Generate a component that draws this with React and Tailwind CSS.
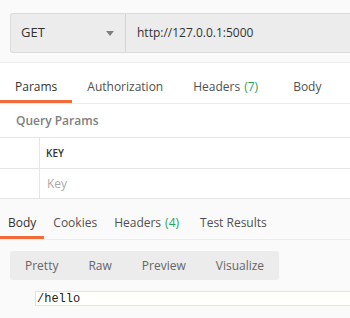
import React from 'react';

const requestTabs = [
  { label: 'Params', active: true },
  { label: 'Authorization' },
  { label: 'Headers', count: '(7)' },
  { label: 'Body' },
];

const responseTabs = [
  { label: 'Body', active: true },
  { label: 'Cookies' },
  { label: 'Headers', count: '(4)' },
  { label: 'Test Results' },
];

const modes = ['Pretty', 'Raw', 'Preview', 'Visualize'];

export default function App() {
  return (
    <div className="w-[350px] h-[318px] overflow-hidden bg-[#fafafa] text-[12px] text-[#505050] font-['Open_Sans',sans-serif]">
      {/* request bar */}
      <div className="h-[63px] pt-[13px] pl-[10px] border-b border-[#ececec]">
        <div className="flex h-[40px] bg-[#ececec] border border-r-0 border-[#dcdcdc] rounded-l-[3px]">
          <div className="w-[115px] flex items-center justify-between pl-[10px] pr-[11px] border-r border-[#d4d4d4] text-[13px] text-[#333]">
            <span>GET</span>
            <svg width="8" height="5" viewBox="0 0 8 5">
              <path d="M0 0h8L4 5z" fill="#808080" />
            </svg>
          </div>
          <div className="flex items-center pl-[11px] text-[#333]">http://127.0.0.1:5000</div>
        </div>
      </div>

      {/* request tabs */}
      <div className="flex h-[41px] bg-white border-b border-[#ececec]">
        {requestTabs.map((t) => (
          <div
            key={t.label}
            className={`flex items-center pt-[11px] pl-[15px] border-b-[3px] ${t.count ? 'pr-[20px]' : 'pr-[15px]'} ${t.active ? 'border-[#f26b3a] text-[#333]' : 'border-transparent'}`}
          >
            {t.label}
            {t.count && <span className="ml-[4px] text-[#26a35f]">{t.count}</span>}
          </div>
        ))}
      </div>

      <div className="bg-white">
        <div className="h-[33px] flex items-center pl-[16px] font-semibold text-[#808080]">Query Params</div>
        <div className="flex h-[31px] border-t border-[#e6e6e6]">
          <div className="w-[40px] border-r border-[#e6e6e6]" />
          <div className="flex items-center pl-[6px] text-[10px] font-semibold text-[#333]">KEY</div>
        </div>
        <div className="flex h-[31px] border-t border-b border-[#e6e6e6]">
          <div className="w-[40px] border-r border-[#e6e6e6]" />
          <div className="flex items-center pl-[7px] text-[#aaa]">Key</div>
        </div>
      </div>

      {/* response */}
      <div className="pt-[5px]">
        <div className="flex h-[36px] border-b border-[#ececec]">
          {responseTabs.map((t) => (
            <div
              key={t.label}
              className={`flex items-center pt-[5px] pl-[8px] mr-[1px] border-b-[3px] ${t.count ? 'pr-[12px]' : 'pr-[8px]'} ${t.active ? 'border-[#f26b3a] text-[#333]' : 'border-transparent'}`}
            >
              {t.label}
              {t.count && <span className="ml-[4px] text-[#26a35f]">{t.count}</span>}
            </div>
          ))}
        </div>

        <div className="flex mt-[11px] ml-[10px] w-max h-[29px] bg-[#ececec] rounded-[3px]">
          {modes.map((m) => (
            <div key={m} className="flex items-center px-[15px] text-[#666]">{m}</div>
          ))}
        </div>

        <div className="mt-[11px] ml-[35px] h-[15px] flex items-center pl-[1px] bg-[#fffffb] border border-r-0 border-[#e3e3e3] font-['Liberation_Mono',monospace] text-[12px] text-[#222]">
          /hello
        </div>
      </div>
    </div>
  );
}
